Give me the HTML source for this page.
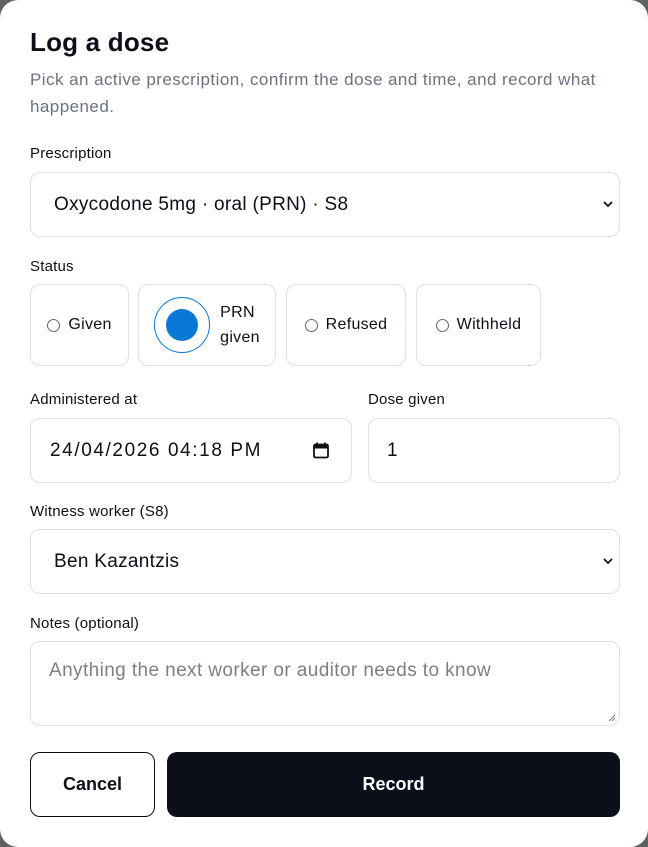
<!DOCTYPE html>
<html><head><style>
body{margin:0;width:648px;height:847px;background:#5f6360;font-family:"Liberation Sans",sans-serif;position:relative;overflow:hidden}
.m{position:absolute;left:0;top:0;width:648px;height:847px;background:#fff;border-radius:18px}
.a{position:absolute}
.lbl{font-size:15px;color:#0b0f19;font-weight:500;letter-spacing:0.2px}
.box{position:absolute;border:1px solid #dcdfe3;border-radius:10px;box-sizing:border-box;background:#fff}
.sel{font-size:19px;color:#0b0f19;display:flex;align-items:center;padding-left:23px;letter-spacing:0.3px}
.chev{position:absolute;right:6px;top:50%;margin-top:-4px}
.rad{display:flex;align-items:center;justify-content:center;font-size:16px;color:#0b0f19;gap:8px;letter-spacing:0.3px}
.rc{width:13px;height:13px;border:1px solid #666;border-radius:50%;box-sizing:border-box}
</style></head><body>
<div class="m">
<div class="a" style="left:30px;top:27px;font-size:26px;font-weight:bold;color:#0b0f19;letter-spacing:0.2px">Log a dose</div>
<div class="a" style="left:30px;top:66px;width:610px;font-size:17px;letter-spacing:0.45px;line-height:27px;color:#6b7280">Pick an active prescription, confirm the dose and time, and record what<br>happened.</div>
<div class="a lbl" style="left:30px;top:145px">Prescription</div>
<div class="box sel" style="left:30px;top:172px;width:590px;height:65px">Oxycodone 5mg · oral (PRN) · S8<svg class="chev" width="10" height="7" viewBox="0 0 10 7"><path d="M1 1l4 4 4-4" stroke="#111" stroke-width="1.8" fill="none"/></svg></div>
<div class="a lbl" style="left:30px;top:258px">Status</div>
<div class="box rad" style="left:30px;top:284px;width:99px;height:82px"><span class="rc"></span>Given</div>
<div class="box rad" style="left:138px;top:284px;width:138px;height:82px;gap:10px"><span style="width:56px;height:56px;border:1.5px solid #0a78d6;border-radius:50%;box-sizing:border-box;display:flex;align-items:center;justify-content:center"><span style="width:32px;height:32px;border-radius:50%;background:#0a78d6"></span></span><span style="line-height:25px">PRN<br>given</span></div>
<div class="box rad" style="left:286px;top:284px;width:120px;height:82px"><span class="rc"></span>Refused</div>
<div class="box rad" style="left:416px;top:284px;width:125px;height:82px"><span class="rc"></span>Withheld</div>
<div class="a lbl" style="left:30px;top:391px">Administered at</div>
<div class="a lbl" style="left:368px;top:391px">Dose given</div>
<div class="box sel" style="left:30px;top:418px;width:322px;height:65px;padding-left:19px;letter-spacing:1.6px">24/04/2026 04:18 PM<svg class="a" style="right:22px;top:23px" width="16" height="17" viewBox="0 0 16 17"><rect x="1" y="2.5" width="14" height="13" rx="1.5" fill="none" stroke="#111" stroke-width="1.8"/><rect x="1" y="2.5" width="14" height="4" fill="#111"/><path d="M4 0.5v3M12 0.5v3" stroke="#111" stroke-width="1.8"/></svg></div>
<div class="box sel" style="left:368px;top:418px;width:252px;height:65px;padding-left:18px">1</div>
<div class="a lbl" style="left:30px;top:503px">Witness worker (S8)</div>
<div class="box sel" style="left:30px;top:529px;width:590px;height:65px">Ben Kazantzis<svg class="chev" width="10" height="7" viewBox="0 0 10 7"><path d="M1 1l4 4 4-4" stroke="#111" stroke-width="1.8" fill="none"/></svg></div>
<div class="a lbl" style="left:30px;top:615px">Notes (optional)</div>
<div class="box" style="left:30px;top:641px;width:590px;height:85px;font-size:19px;letter-spacing:0.4px;color:#7b7f86;padding:18px 0 0 18px">Anything the next worker or auditor needs to know<svg class="a" style="right:3px;bottom:3px" width="8" height="8"><path d="M1 7L7 1M4 7L7 4" stroke="#777"/></svg></div>
<div class="box" style="left:30px;top:752px;width:125px;height:65px;border:1px solid #0b0f19;display:flex;align-items:center;justify-content:center;font-size:18px;font-weight:bold;color:#0b0f19">Cancel</div>
<div class="a" style="left:167px;top:752px;width:453px;height:65px;background:#0b0f19;border-radius:10px;display:flex;align-items:center;justify-content:center;font-size:18px;font-weight:bold;color:#fff">Record</div>
</div>
</body></html>
